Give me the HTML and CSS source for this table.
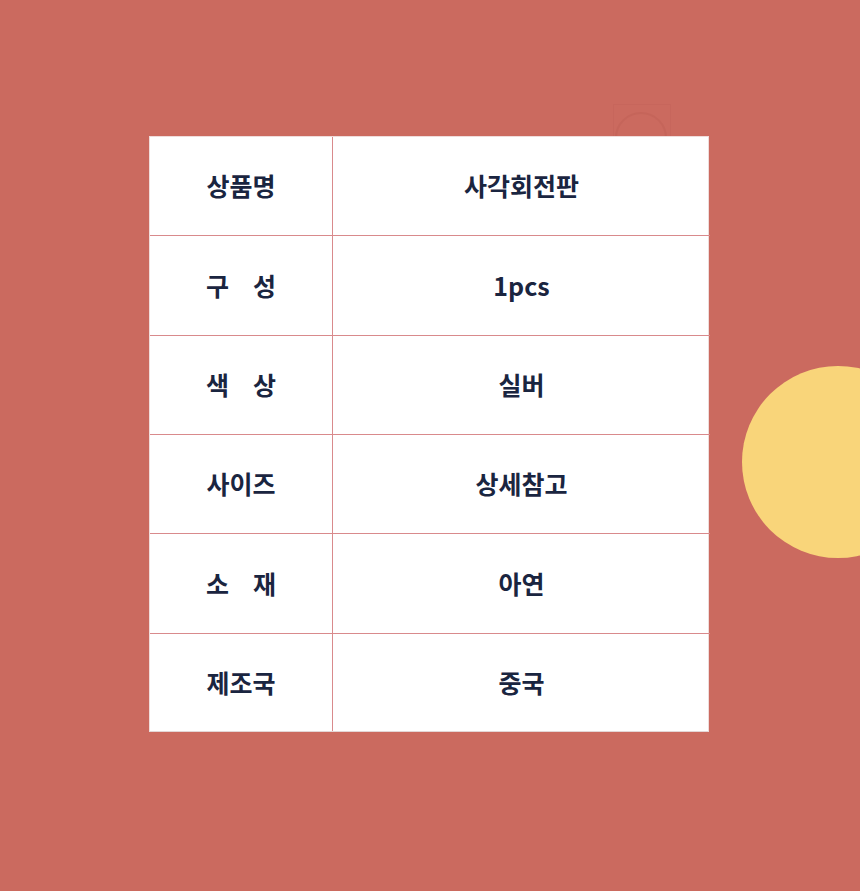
FILE: index.html
```html
<!DOCTYPE html>
<html lang="ko">
<head>
<meta charset="utf-8">
<link rel="stylesheet" href="styles.css">
</head>
<body>
<div class="page">
  <svg class="ring" width="60" height="40" viewBox="0 0 60 40" aria-hidden="true">
    <rect x="0.5" y="0.5" width="57" height="45" fill="none" stroke="#b85a50" stroke-opacity="0.2"/>
    <circle cx="28" cy="34" r="25" fill="none" stroke="#b85a50" stroke-opacity="0.3" stroke-width="2"/>
  </svg>
  <div class="sun"></div>
  <div class="spec">
    <div class="label">상품명</div><div class="value">사각회전판</div>
    <div class="label"><span class="spread"><span>구</span><span>성</span></span></div><div class="value">1pcs</div>
    <div class="label"><span class="spread"><span>색</span><span>상</span></span></div><div class="value">실버</div>
    <div class="label">사이즈</div><div class="value">상세참고</div>
    <div class="label"><span class="spread"><span>소</span><span>재</span></span></div><div class="value">아연</div>
    <div class="label">제조국</div><div class="value">중국</div>
  </div>
</div>
</body>
</html>
```

FILE: styles.css
```css
html, body {
  margin: 0;
  padding: 0;
}
body {
  background: #cb6a5f;
  width: 860px;
  height: 891px;
  overflow: hidden;
  font-family: "Noto Sans CJK KR", "Noto Sans", sans-serif;
}
.page {
  position: relative;
  width: 860px;
  height: 891px;
  padding: 136px 0 0 149px;
  box-sizing: border-box;
  overflow: hidden;
}
.ring {
  position: absolute;
  left: 613px;
  top: 104px;
}
.sun {
  position: absolute;
  left: 742px;
  top: 366px;
  width: 192px;
  height: 192px;
  border-radius: 50%;
  background: #f9d57a;
}
.spec {
  position: relative;
  display: grid;
  grid-template-columns: 183px 377px;
  grid-template-rows: 99px 100px 99px 99px 100px 97px;
  width: 560px;
  height: 596px;
  background: #ffffff;
  border: 1px solid #efdcdb;
  border-bottom-color: #e3d6d6;
  box-sizing: border-box;
}
.label, .value {
  display: flex;
  align-items: center;
  justify-content: center;
  padding-bottom: 2px;
  font-size: 25px;
  font-weight: 700;
  color: #1a2540;
  border-bottom: 1px solid #d98a8c;
}
.label {
  border-right: 1px solid #d98a8c;
}
.label:nth-last-child(2), .value:last-child {
  border-bottom: none;
}
.spread {
  display: flex;
  justify-content: space-between;
  width: 70px;
}
```
